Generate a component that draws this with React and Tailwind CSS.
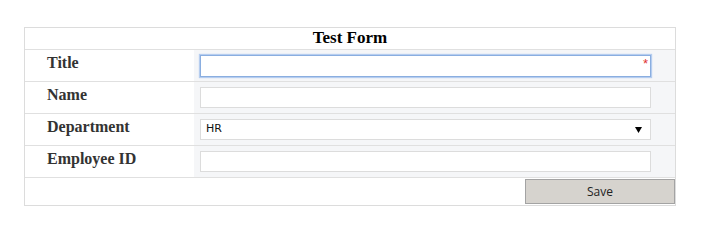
import React from "react";

function Row({ label, children }) {
  return (
    <div className="flex h-[32px] border-b border-[#e0e0e0]">
      <div className="w-[169px] shrink-0 pl-[22px] pt-[4px] text-[16px] leading-[18px] font-bold text-[#333]" style={{ fontFamily: '"Liberation Serif", serif' }}>
        {label}
      </div>
      <div className="flex-1 bg-[#f5f6f8] pl-[6px] flex items-center">{children}</div>
    </div>
  );
}

export default function App() {
  return (
    <div className="bg-white w-[708px] h-[238px] pt-[27px] pl-[24px]">
      <div className="w-[652px] border border-[#dcdcdc]">
        <div className="h-[22px] border-b border-[#e0e0e0] text-center text-[17px] leading-[20px] font-bold text-black" style={{ fontFamily: '"Liberation Serif", serif' }}>
          Test Form
        </div>
        <Row label="Title">
          <div className="relative w-[451px] h-[22px] bg-white border border-[#8aaee0] shadow-[0_0_1px_1px_#b6cdef]">
            <span className="absolute right-[2px] top-[1px] text-[13px] leading-[13px] text-[#e03030]" style={{ fontFamily: '"Liberation Sans", sans-serif' }}>*</span>
          </div>
        </Row>
        <Row label="Name">
          <div className="w-[451px] h-[21px] bg-white border border-[#dcdcdc]" />
        </Row>
        <Row label="Department">
          <div className="w-[451px] h-[21px] bg-white border border-[#dcdcdc] flex items-center justify-between pl-[5px] pr-[8px]">
            <span className="text-[11px] text-[#111]" style={{ fontFamily: '"DejaVu Sans", sans-serif' }}>HR</span>
            <svg width="7" height="6" viewBox="0 0 7 6"><path d="M0 0H7L3.5 6Z" fill="#000" /></svg>
          </div>
        </Row>
        <Row label="Employee ID">
          <div className="w-[451px] h-[21px] bg-white border border-[#dcdcdc]" />
        </Row>
        <div className="h-[27px] flex justify-end items-start pt-[1px]">
          <button className="w-[150px] h-[25px] bg-[#d6d3ce] border border-[#a3a3a3] text-[12px] text-[#222]" style={{ fontFamily: '"Open Sans", sans-serif' }}>
            Save
          </button>
        </div>
      </div>
    </div>
  );
}
